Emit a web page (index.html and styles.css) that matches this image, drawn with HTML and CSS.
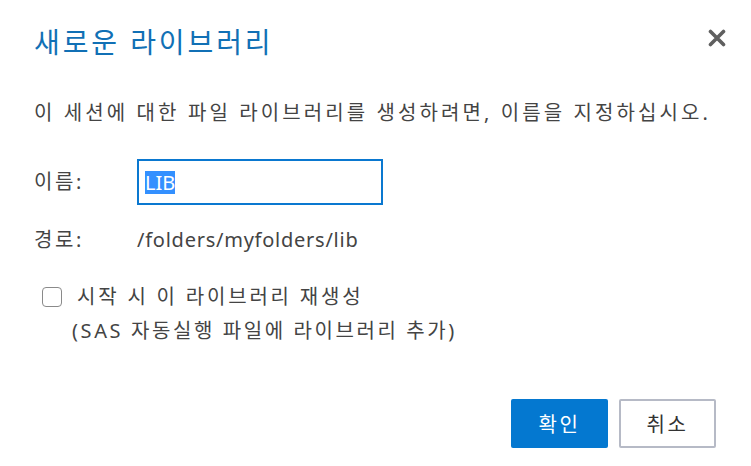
FILE: index.html
```html
<!DOCTYPE html>
<html lang="ko">
<head>
<meta charset="utf-8">
<title>새로운 라이브러리</title>
<link rel="stylesheet" href="styles.css">
</head>
<body>
<div class="dialog">
  <div class="header">
    <h1 class="title">새로운 라이브러리</h1>
    <button class="close" aria-label="닫기">
      <svg width="18" height="18" viewBox="0 0 18 18"><path d="M2.5 2.5 L15.5 15.5 M15.5 2.5 L2.5 15.5" stroke="#5f5f5f" stroke-width="3.6" stroke-linecap="round"/></svg>
    </button>
  </div>
  <p class="instr">이 세션에 대한 파일 라이브러리를 생성하려면, 이름을 지정하십시오.</p>
  <div class="form">
    <div class="label">이름:</div>
    <div class="input"><span class="sel">LIB</span></div>
    <div class="label">경로:</div>
    <div class="path">/folders/myfolders/lib</div>
  </div>
  <div class="check">
    <div class="check-row">
      <span class="box"></span>
      <span class="check-text">시작 시 이 라이브러리 재생성</span>
    </div>
    <div class="check-note">(SAS 자동실행 파일에 라이브러리 추가)</div>
  </div>
  <div class="footer">
    <button class="btn primary">확인</button>
    <button class="btn secondary">취소</button>
  </div>
</div>
</body>
</html>
```
FILE: styles.css
```css
html, body {
  margin: 0;
  padding: 0;
  background: #ffffff;
}
body {
  font-family: "Noto Sans", "Noto Sans CJK KR", sans-serif;
  color: #444444;
}
.dialog {
  width: 751px;
  height: 466px;
  box-sizing: border-box;
  padding: 24px 25px 0 34px;
  display: flex;
  flex-direction: column;
}
.header {
  display: flex;
  justify-content: space-between;
  align-items: center;
  height: 36px;
}
.title {
  margin: 0;
  font-weight: normal;
  font-size: 28px;
  line-height: 36px;
  letter-spacing: 2.9px;
  color: #1170b5;
}
.close {
  border: 0;
  background: none;
  padding: 0;
  width: 18px;
  height: 18px;
  margin-top: -8px;
  display: flex;
}
.instr {
  margin: 38px 0 0;
  font-size: 20px;
  line-height: 30px;
  letter-spacing: 3.1px;
  white-space: nowrap;
}
.form {
  margin-top: 31px;
  display: grid;
  grid-template-columns: 103px 246px;
  row-gap: 20px;
  align-items: center;
}
.label {
  font-size: 20px;
  letter-spacing: 2.6px;
  line-height: 30px;
}
.input {
  height: 46px;
  box-sizing: border-box;
  border: 2px solid #0a78d0;
  padding: 0 0 0 6px;
  display: flex;
  align-items: center;
}
.sel {
  background: #3390ff;
  color: #ffffff;
  font-size: 20px;
  line-height: 23px;
}
.path {
  font-size: 20px;
  line-height: 30px;
  letter-spacing: 0.75px;
  white-space: nowrap;
}
.check {
  margin-top: 25px;
  font-size: 20px;
  line-height: 34px;
  letter-spacing: 2.6px;
}
.check-row {
  display: flex;
  align-items: center;
  padding-left: 8px;
}
.check-text {
  letter-spacing: 2.8px;
}
.box {
  width: 20px;
  height: 20px;
  box-sizing: border-box;
  border: 1.5px solid #8a8a8a;
  border-radius: 4px;
  margin-right: 15px;
}
.check-note {
  padding-left: 38px;
}
.footer {
  margin-top: 51px;
  padding-right: 10px;
  display: flex;
  justify-content: flex-end;
  gap: 11px;
}
.btn {
  width: 97px;
  height: 49px;
  box-sizing: border-box;
  font-family: "Noto Sans", "Noto Sans CJK KR", sans-serif;
  font-size: 20px;
  letter-spacing: 2.6px;
  border-radius: 2px;
  padding: 0;
}
.primary {
  background: #0478d0;
  color: #ffffff;
  border: 0;
}
.secondary {
  background: #ffffff;
  color: #333333;
  border: 2px solid #b6bac6;
}
```
